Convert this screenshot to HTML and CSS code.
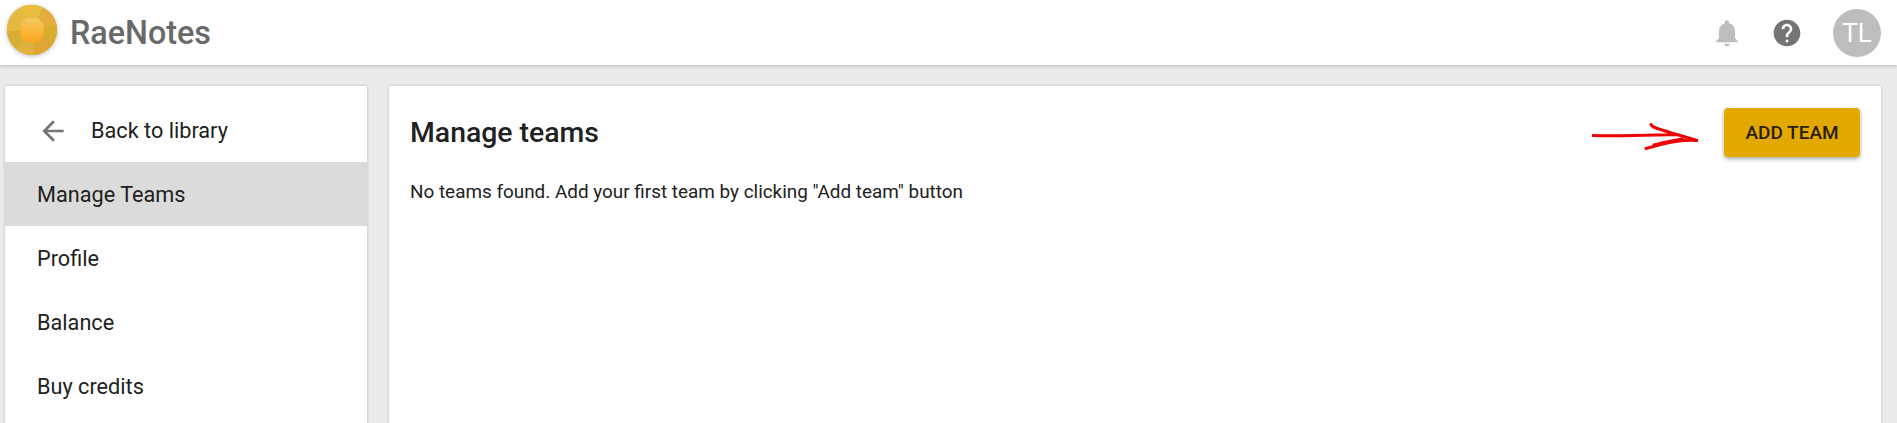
FILE: index.html
```html
<!DOCTYPE html>
<html lang="en">
<head>
<meta charset="utf-8">
<title>RaeNotes</title>
<link rel="stylesheet" href="styles.css">
</head>
<body>
<header class="topbar">
  <div class="brand">
    <svg class="logo" viewBox="0 0 50 50" width="50" height="50">
      <defs>
        <linearGradient id="core" x1="0" y1="0" x2="0" y2="1">
          <stop offset="0" stop-color="#f5c860"/>
          <stop offset="1" stop-color="#fca71e"/>
        </linearGradient>
      </defs>
      <circle cx="25" cy="25" r="25" fill="#dcb238"/>
      <path d="M25 25 L13 2.500 A25 25 0 0 1 36 2.500 Z" fill="#e9bd3e"/>
      <path d="M25 25 L36 2.500 A25 25 0 0 1 49.500 20 Z" fill="#e2ad3c"/>
      <path d="M25 25 L49.500 20 A25 25 0 0 1 47 37 Z" fill="#d8ac2e"/>
      <path d="M25 25 L47 37 A25 25 0 0 1 27 50 Z" fill="#dca733"/>
      <path d="M25 25 L27 50 A25 25 0 0 1 8 43 Z" fill="#e0b13c"/>
      <path d="M25 25 L8 43 A25 25 0 0 1 0 26 Z" fill="#d9ad35"/>
      <path d="M25 25 L0 26 A25 25 0 0 1 13 2.500 Z" fill="#e3b93f"/>
      <path d="M18.500 13.500 H31.500 L36.500 18.500 V31.500 L31.500 36.500 H18.500 L13.500 31.500 V18.500 Z" fill="url(#core)"/>
    </svg>
    <span class="brand-name">RaeNotes</span>
  </div>
  <div class="actions">
    <svg class="bell" viewBox="0 0 24 24" width="32" height="32"><path fill="#bdbdbd" d="M12 22c1.100 0 2-.9 2-2h-4c0 1.100.9 2 2 2zm6-6v-5c0-3.070-1.630-5.640-4.500-6.320V4c0-.83-.67-1.500-1.500-1.500s-1.500.67-1.500 1.500v.68C7.640 5.360 6 7.920 6 11v5l-2 2v1h16v-1l-2-2z"/></svg>
    <svg class="help" viewBox="0 0 24 24" width="32" height="32"><path fill="#757575" d="M12 2C6.480 2 2 6.480 2 12s4.480 10 10 10 10-4.480 10-10S17.520 2 12 2zm1 17h-2v-2h2v2zm2.070-7.750l-.9.920C13.450 12.900 13 13.500 13 15h-2v-.5c0-1.100.45-2.100 1.170-2.830l1.240-1.260c.37-.36.590-.86.590-1.410 0-1.100-.9-2-2-2s-2 .9-2 2H8c0-2.210 1.790-4 4-4s4 1.790 4 4c0 .88-.36 1.680-.93 2.250z"/></svg>
    <div class="avatar">TL</div>
  </div>
</header>
<div class="content">
  <nav class="sidebar">
    <a class="nav-item back">
      <svg class="back-icon" viewBox="0 0 24 24" width="32" height="32"><path fill="#757575" d="M20 11H7.830l5.590-5.590L12 4l-8 8 8 8 1.410-1.410L7.830 13H20v-2z"/></svg>
      <span>Back to library</span>
    </a>
    <a class="nav-item active">Manage Teams</a>
    <a class="nav-item">Profile</a>
    <a class="nav-item">Balance</a>
    <a class="nav-item">Buy credits</a>
  </nav>
  <main class="panel">
    <div class="panel-head">
      <h1 class="title">Manage teams</h1>
      <div class="cta">
        <svg class="arrow" viewBox="0 0 106 36" width="106" height="36"><path fill="none" stroke="#f00000" stroke-width="3" stroke-linecap="round" stroke-linejoin="round" d="M1 20.500 C30 21.500 60 20 85 19.500 L105 25.500 C90 24 72 28 54 33.500 M59 9.500 C60 13 76 17 92 21.500 M62 30 C72 27 80 26 90 24"/></svg>
        <button class="add-btn" type="button">ADD TEAM</button>
      </div>
    </div>
    <p class="empty">No teams found. Add your first team by clicking "Add team" button</p>
  </main>
</div>
</body>
</html>
```
FILE: styles.css
```css
* { box-sizing: border-box; }
html, body { margin: 0; height: 100%; overflow: hidden; }
body {
  background: #ebebeb;
  font-family: Roboto, "Liberation Sans", sans-serif;
  color: #212121;
}
.topbar {
  height: 65px;
  background: #fff;
  box-shadow: 0 1px 4px rgba(0, 0, 0, 0.2);
  display: flex;
  align-items: center;
  justify-content: space-between;
  padding: 0 16px 0 7px;
  position: relative;
}
.brand { display: flex; align-items: center; gap: 13px; }
.logo { display: block; margin-bottom: 5px; filter: drop-shadow(0 1px 2px rgba(0, 0, 0, 0.25)); }
.brand-name { font-size: 32.300px; font-weight: 500; color: #696969; }
.actions { display: flex; align-items: center; }
.bell { margin-right: 28px; }
.help { margin-right: 30px; }
.avatar {
  width: 48px;
  height: 48px;
  border-radius: 50%;
  background: #bdbdbd;
  color: #fff;
  font-size: 26px;
  display: flex;
  align-items: center;
  justify-content: center;
}
.content {
  display: flex;
  gap: 22px;
  padding: 21px 16px 0 5px;
  height: 358px;
}
.sidebar, .panel {
  background: #fff;
  box-shadow: 0 0 3px rgba(0, 0, 0, 0.2);
}
.sidebar {
  width: 362px;
  flex: none;
  padding-top: 12px;
  height: 400px;
}
.nav-item {
  display: flex;
  align-items: center;
  height: 64px;
  padding-left: 32px;
  padding-top: 1px;
  font-size: 21.700px;
  color: #212121;
}
.nav-item.active { background: #dbdbdb; }
.nav-item.back { padding-left: 32px; gap: 22px; }
.back-icon { flex: none; }
.panel {
  flex: 1;
  padding: 22px 21px 0 21px;
  height: 400px;
}
.panel-head { display: flex; align-items: center; justify-content: space-between; }
.title { margin: 0; font-size: 28.400px; font-weight: 500; color: #212121; }
.cta { display: flex; align-items: center; gap: 26px; }
.add-btn {
  width: 136px;
  height: 49px;
  border: none;
  border-radius: 4px;
  background: #e3a900;
  color: #2b1d00;
  font-family: inherit;
  font-size: 19px;
  font-weight: 500;
  box-shadow: 0 2px 4px rgba(0, 0, 0, 0.35);
}
.empty { margin: 23px 0 0; font-size: 18.900px; color: #212121; }
```
